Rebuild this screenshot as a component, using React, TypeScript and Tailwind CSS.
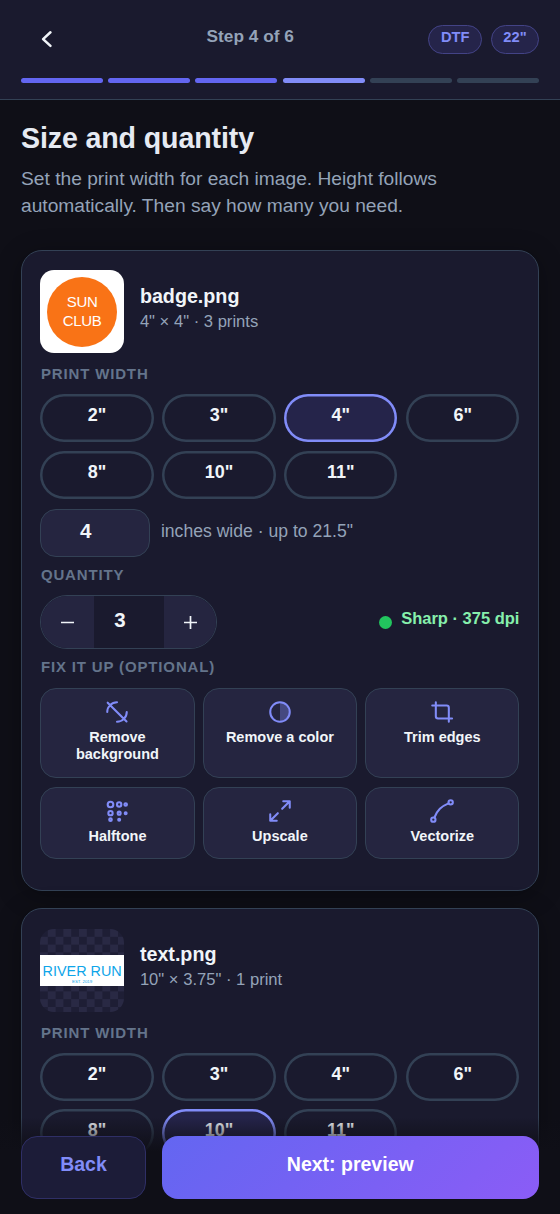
import type { ReactNode } from "react";

const WIDTHS = ['2"', '3"', '4"', '6"', '8"', '10"', '11"'];

function Icon({ children }: { children: ReactNode }) {
  return (
    <svg
      viewBox="0 0 24 24"
      className="size-[26px] shrink-0 text-[#818cf8]"
      fill="none"
      stroke="currentColor"
      strokeWidth="1.9"
      strokeLinecap="round"
      strokeLinejoin="round"
    >
      {children}
    </svg>
  );
}

const TOOLS: { label: string; icon: ReactNode }[] = [
  {
    label: "Remove background",
    icon: <path d="M3.4 3.4l17.4 17.4M3 12a9 9 0 0 1 9-9M21 12a9 9 0 0 1-9 9" />,
  },
  {
    label: "Remove a color",
    icon: (
      <>
        <circle cx="12" cy="12" r="9" />
        <path d="M12 3a9 9 0 0 1 0 18z" fill="currentColor" fillOpacity=".35" stroke="none" />
      </>
    ),
  },
  {
    label: "Trim edges",
    icon: <path d="M6.3 3v13a2 2 0 0 0 2 2h13M3 6h13.3a2 2 0 0 1 2 2v13" />,
  },
  {
    label: "Halftone",
    icon: (
      <>
        <circle cx="6" cy="6" r="2.6" />
        <circle cx="14" cy="6" r="2" />
        <circle cx="20" cy="6" r="1.2" />
        <circle cx="6" cy="14" r="2" />
        <circle cx="14" cy="14" r="1.4" />
        <circle cx="20" cy="14" r=".9" />
        <circle cx="6" cy="20" r="1.2" />
        <circle cx="14" cy="20" r=".9" />
      </>
    ),
  },
  { label: "Upscale", icon: <path d="M15 3h6v6M9 21H3v-6M21 3l-7 7M3 21l7-7" /> },
  {
    label: "Vectorize",
    icon: (
      <>
        <circle cx="4" cy="20" r="2" />
        <circle cx="20" cy="4" r="2" />
        <path d="M5 18C8 11 11 8 18 5" />
      </>
    ),
  },
];

function Label({ children, className }: { children: ReactNode; className: string }) {
  return (
    <div className={`flex items-center pl-[0.5px] text-[15px] leading-none font-bold tracking-[0.85px] text-[#64748b] ${className}`}>
      {children}
    </div>
  );
}

function Card({
  name,
  meta,
  thumb,
  selected,
  rowGap,
  textTop,
  children,
  className,
}: {
  name: string;
  meta: string;
  thumb: ReactNode;
  selected: string;
  rowGap: string;
  textTop: string;
  children?: ReactNode;
  className: string;
}) {
  return (
    <section
      className={`shrink-0 rounded-[21px] border-[1.3px] border-[#334155] bg-[#1a1a2e] pr-[18.6px] pl-[18.4px] shadow-[0_5px_26px_rgba(0,0,0,0.3)] ${className}`}
    >
      <div className="flex h-[83.5px] gap-[16px]">
        {thumb}
        <div className={textTop}>
          <h2 className="text-[19.7px] leading-[25px] font-bold text-[#f1f5f9]">{name}</h2>
          <p className="text-[16.6px] leading-[25px] text-[#94a3b8]">{meta}</p>
        </div>
      </div>
      <Label className="h-[40.5px]">PRINT WIDTH</Label>
      <div className={`grid grid-cols-4 gap-x-[8.7px] ${rowGap}`}>
        {WIDTHS.map((w) => (
          <button
            key={w}
            className={`flex h-[48px] items-center justify-center rounded-full pb-[5px] text-[18px] leading-none font-bold text-[#f1f5f9] ${
              w === selected
                ? "bg-[#25244a] shadow-[inset_0_0_0_2.5px_#818cf8]"
                : "shadow-[inset_0_0_0_2.5px_#334155]"
            }`}
          >
            {w}
          </button>
        ))}
      </div>
      {children}
    </section>
  );
}

export default function App() {
  return (
    <div className="relative flex h-[1214px] w-[560px] flex-col overflow-hidden bg-[#0f0f17] font-['Liberation_Sans',Arial,sans-serif]">
      <header className="h-[100px] shrink-0 border-b border-[#334155] bg-[#1a1a2e] px-[21px]">
        <div className="flex h-[78px] items-center justify-between">
          <button className="flex w-[51px] justify-center">
            <svg viewBox="0 0 24 24" className="size-[26px] text-[#f1f5f9]" fill="none" stroke="currentColor" strokeWidth="2.3" strokeLinecap="round" strokeLinejoin="round">
              <path d="M15.2 5.8L8.4 12.1l6.8 6.3" />
            </svg>
          </button>
          <div className="pb-[5px] text-[17.3px] font-bold text-[#94a3b8]">Step 4 of 6</div>
          <div className="flex justify-end gap-[9px]">
            <span className="flex h-[29px] w-[53.5px] items-center justify-center rounded-full border border-[#434386] bg-[#25244a] pb-[3.5px] text-[14.7px] font-bold text-[#818cf8]">DTF</span>
            <span className="flex h-[29px] w-[48px] items-center justify-center rounded-full border border-[#434386] bg-[#25244a] pb-[3.5px] text-[14.7px] font-bold text-[#818cf8]">22"</span>
          </div>
        </div>
        <div className="grid grid-cols-6 gap-[5.2px]">
          {[1, 2, 3, 4, 5, 6].map((n) => (
            <i key={n} className={`h-[5.4px] rounded-full ${n < 4 ? "bg-[#6366f1]" : n === 4 ? "bg-[#818cf8]" : "bg-[#334155]"}`} />
          ))}
        </div>
      </header>

      <main className="flex flex-1 flex-col px-[21px] pt-[20px]">
        <h1 className="h-[45px] text-[28.6px] leading-[36px] font-bold tracking-[-0.13px] text-[#e6eaf2]">Size and quantity</h1>
        <p className="h-[85px] shrink-0 text-[19.2px] leading-[27.3px] text-[#94a3b8]">
          Set the print width for each image. Height follows
          <br />
          automatically. Then say how many you need.
        </p>

        <Card
          name="badge.png"
          meta={'4" × 4" · 3 prints'}
          selected={'4"'}
          rowGap="gap-y-[9px]"
          textTop="pt-[14.3px]"
          className="h-[641px] pt-[18.8px]"
          thumb={
            <div className="flex size-[83.5px] items-center justify-center rounded-[14px] bg-white">
              <div className="flex size-[70px] flex-col items-center justify-center rounded-full bg-[#f97316] text-center text-[15px] leading-[18.7px] tracking-[-0.3px] text-white">
                <span>SUN</span>
                <span>CLUB</span>
              </div>
            </div>
          }
        >
          <div className="mt-[10.1px] flex h-[48.5px] items-center gap-[11px]">
            <div className="flex h-full w-[109.5px] items-center justify-center rounded-[16px] border-[1.3px] border-[#334155] bg-[#252540] pr-[19px] pb-[4px] text-[20.5px] leading-none font-bold text-[#f1f5f9]">4</div>
            <span className="pb-[4px] text-[17.6px] text-[#94a3b8]">inches wide · up to 21.5"</span>
          </div>
          <Label className="h-[37.5px] pb-[3px]">QUANTITY</Label>
          <div className="flex h-[54.5px] items-center justify-between">
            <div className="flex h-full w-[177px] overflow-hidden rounded-full border-[1.3px] border-[#334155]">
              <button className="flex w-[52.5px] items-center justify-center bg-[#252540]">
                <svg viewBox="0 0 13 13" className="size-[13px]" stroke="#f1f5f9" strokeWidth="1.7">
                  <path d="M0 6.5h13" />
                </svg>
              </button>
              <div className="flex flex-1 items-center justify-center bg-[#1a1a2e] pr-[18px] pb-[4.5px] text-[20.5px] leading-none font-bold text-[#f1f5f9]">3</div>
              <button className="flex w-[52.5px] items-center justify-center bg-[#252540]">
                <svg viewBox="0 0 13 13" className="size-[13px]" stroke="#f1f5f9" strokeWidth="1.7">
                  <path d="M0 6.5h13M6.5 0v13" />
                </svg>
              </button>
            </div>
            <div className="flex items-center gap-[9.5px]">
              <i className="size-[13px] rounded-full bg-[#22c55e]" />
              <span className="pb-[7px] text-[16.5px] font-bold text-[#86efac]">Sharp · 375 dpi</span>
            </div>
          </div>
          <Label className="h-[38.4px] pb-[4px]">FIX IT UP (OPTIONAL)</Label>
          <div className="grid grid-cols-3 grid-rows-[90px_72.5px] gap-x-[8.3px] gap-y-[9px]">
            {TOOLS.map((t) => (
              <button key={t.label} className="flex flex-col items-center rounded-[16px] border-[1.3px] border-[#334155] bg-[#252540] px-[8px] pt-[10px] text-[14.5px] leading-[17px] font-bold text-[#f1f5f9]">
                <Icon>{t.icon}</Icon>
                <span className="mt-[4px] max-w-[114px]">{t.label}</span>
              </button>
            ))}
          </div>
        </Card>

        <Card
          name="text.png"
          meta={'10" × 3.75" · 1 print'}
          selected={'10"'}
          rowGap="gap-y-[8px]"
          textTop="pt-[13.4px]"
          className="mt-[17px] h-[500px] pt-[19.5px]"
          thumb={
            <div className="flex size-[83.5px] flex-col justify-center overflow-hidden rounded-[14px] bg-[repeating-conic-gradient(#292944_0_25%,#1e1e35_0_50%)] bg-[length:15.6px_15.6px]">
              <div className="flex h-[31.5px] flex-col items-center bg-white pt-[8px] text-[#0ea5e9]">
                <span className="text-[14.4px] leading-[16px] whitespace-nowrap">RIVER RUN</span>
                <span className="text-[4.4px] leading-[5px]">EST. 2019</span>
              </div>
            </div>
          }
        />
      </main>

      <footer className="absolute inset-x-0 bottom-0 flex h-[104px] gap-[15.5px] bg-[linear-gradient(to_bottom,transparent_7%,#0f0f17_40%)] px-[21px] pt-[26px]">
        <button className="flex h-[62.5px] w-[125px] items-center justify-center rounded-[16px] border-[1.3px] border-[#2f2f66] bg-[#1c1c38] pb-[5px] text-[19.5px] font-bold text-[#818cf8]">Back</button>
        <button className="flex h-[62.5px] flex-1 items-center justify-center rounded-[16px] bg-[linear-gradient(135deg,#6366f1,#8b5cf6)] pb-[5px] text-[19.5px] font-bold text-white">Next: preview</button>
      </footer>
    </div>
  );
}
